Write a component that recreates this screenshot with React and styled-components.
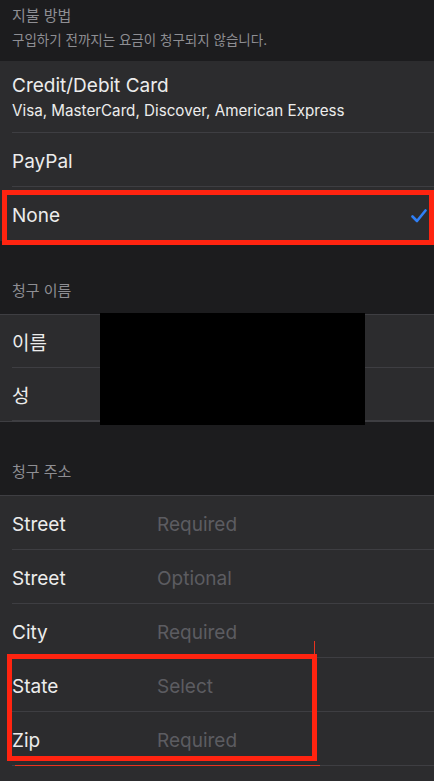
import styled, { createGlobalStyle } from "styled-components";

const GlobalStyle = createGlobalStyle`
  html, body {
    margin: 0;
    padding: 0;
    background: #1c1c1e;
  }
  body {
    font-family: "Inter", "Noto Sans CJK KR", sans-serif;
    color: #ececec;
    -webkit-font-smoothing: antialiased;
  }
`;

const Page = styled.div`
  width: 434px;
  height: 781px;
  overflow: hidden;
  background: #1c1c1e;
`;

const TopHeader = styled.div`
  height: 61px;
  box-sizing: border-box;
  padding: 6px 12px 0;
  display: flex;
  flex-direction: column;
  gap: 5px;
`;

const HeaderTitle = styled.div`
  font-size: 15px;
  line-height: 20px;
  color: #8e8e93;
`;

const HeaderNote = styled.div`
  font-size: 13.5px;
  line-height: 18px;
  color: #8e8e93;
`;

const SectionHeader = styled.div`
  height: 73px;
  box-sizing: border-box;
  padding: 0 12px 13px;
  display: flex;
  align-items: flex-end;
  font-size: 15px;
  line-height: 20px;
  color: #8e8e93;
`;

const Group = styled.div`
  position: relative;
  background: #2c2c2e;
  border-top: ${(p) => (p.$lined ? "1px solid #3e3e42" : "none")};
  border-bottom: ${(p) => (p.$lined ? "1px solid #3e3e42" : "none")};
`;

const Row = styled.div`
  position: relative;
  height: ${(p) => p.$h || 54}px;
  box-sizing: border-box;
  padding: 4px 12px 0;
  display: flex;
  align-items: center;

  &:not(:last-child)::after {
    content: "";
    position: absolute;
    left: 12px;
    right: 0;
    bottom: 0;
    height: 1px;
    background: #3e3e42;
  }
`;

const TallRow = styled(Row)`
  height: 72px;
  padding-top: 0;
`;

const Stack = styled.div`
  display: flex;
  flex-direction: column;
  gap: 5px;
`;

const Label = styled.div`
  font-size: 19px;
  line-height: 22px;
  color: #ececec;
  width: ${(p) => (p.$field ? "145px" : "auto")};
  flex: ${(p) => (p.$field ? "none" : "1")};
`;

const SubLabel = styled.div`
  font-size: 15.2px;
  line-height: 18px;
  color: #ececec;
`;

const Placeholder = styled.div`
  font-size: 19px;
  line-height: 22px;
  color: #5c5c61;
`;

const Check = styled.svg`
  width: 16px;
  height: 14px;
  margin-right: -5px;
`;

const Highlight = styled.div`
  position: absolute;
  top: ${(p) => p.$top}px;
  left: ${(p) => p.$left}px;
  width: ${(p) => p.$w}px;
  height: ${(p) => p.$h}px;
  box-sizing: border-box;
  border: 5px solid #ff2410;
  pointer-events: none;
`;

const Stroke = styled.div`
  position: absolute;
  top: ${(p) => p.$top}px;
  left: ${(p) => p.$left}px;
  width: ${(p) => p.$w}px;
  height: ${(p) => p.$h}px;
  background: #e8321e;
`;

const Redaction = styled.div`
  position: absolute;
  top: -2px;
  left: 100px;
  width: 265px;
  height: 112px;
  background: #000;
`;

const addressRows = [
  ["Street", "Required"],
  ["Street", "Optional"],
  ["City", "Required"],
  ["State", "Select"],
  ["Zip", "Required"],
  ["", ""],
];

export default function App() {
  return (
    <Page>
      <GlobalStyle />
      <TopHeader>
        <HeaderTitle>지불 방법</HeaderTitle>
        <HeaderNote>구입하기 전까지는 요금이 청구되지 않습니다.</HeaderNote>
      </TopHeader>

      <Group>
        <TallRow>
          <Stack>
            <Label>Credit/Debit Card</Label>
            <SubLabel>Visa, MasterCard, Discover, American Express</SubLabel>
          </Stack>
        </TallRow>
        <Row>
          <Label>PayPal</Label>
        </Row>
        <Row>
          <Label>None</Label>
          <Check viewBox="0 0 16 14">
            <polyline
              points="1.5,7.5 6,12 14.5,1.5"
              fill="none"
              stroke="#2f7ff6"
              strokeWidth="2.6"
              strokeLinecap="round"
              strokeLinejoin="round"
            />
          </Check>
          <Highlight $top={3} $left={2} $w={432} $h={55} />
        </Row>
      </Group>

      <SectionHeader>청구 이름</SectionHeader>
      <Group $lined>
        <Row $h={53}>
          <Label>이름</Label>
        </Row>
        <Row $h={53}>
          <Label>성</Label>
        </Row>
        <Redaction />
      </Group>

      <SectionHeader>청구 주소</SectionHeader>
      <Group $lined>
        {addressRows.map(([label, hint], i) => (
          <Row key={i}>
            <Label $field>{label}</Label>
            <Placeholder>{hint}</Placeholder>
          </Row>
        ))}
        <Highlight $top={158} $left={7} $w={310} $h={107} />
        <Stroke $top={145} $left={314} $w={1} $h={14} />
        <Stroke $top={269} $left={15} $w={305} $h={1} />
      </Group>
    </Page>
  );
}
